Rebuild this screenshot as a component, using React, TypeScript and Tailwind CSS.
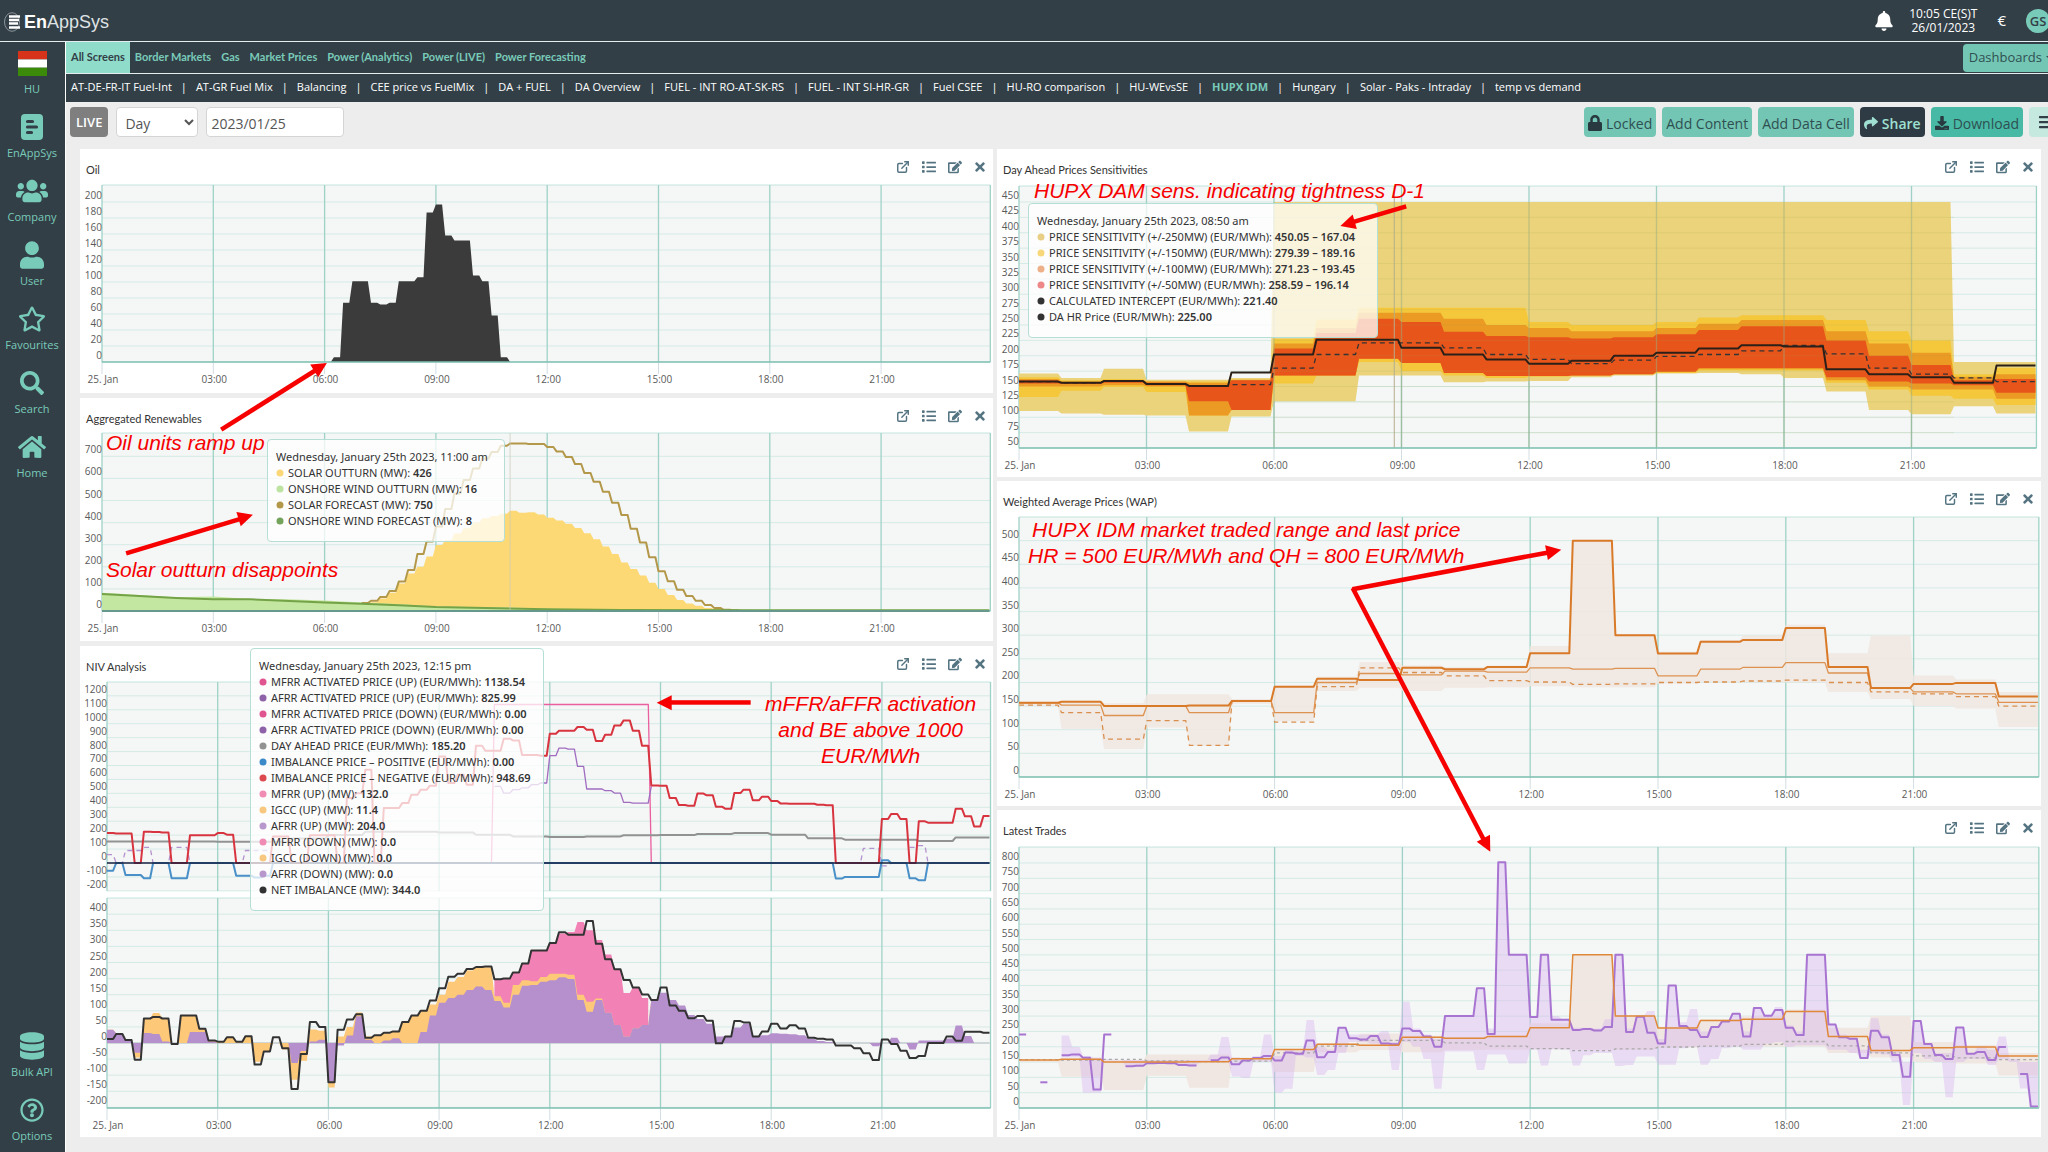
import React from 'react';
import { FaBars, FaBell, FaDatabase, FaDownload, FaEdit, FaHome, FaList, FaLock, FaRegQuestionCircle, FaRegStar, FaSearch, FaShare, FaTimes, FaUser, FaUsers } from 'react-icons/fa';
import { FiExternalLink } from 'react-icons/fi';

type Point = [number, number];

interface Scale {
  x0: number;
  hour: number;
  base: number;
  baseValue: number;
  unit: number;
}

const QUARTER = 0.25;
const TICK = 1 / 12;
const DAY_END = 24 - TICK;

// every value is held until five minutes before the next one
const steps = (values: number[], step: number, start = 0): Point[] =>
  values.flatMap((v, i): Point[] => {
    const t = start + i * step;
    return [[t, v], [t + step - TICK, v]];
  });

const px = (s: Scale, t: number) => s.x0 + t * s.hour;
const py = (s: Scale, v: number) => s.base - (v - s.baseValue) * s.unit;
const coords = (s: Scale, pts: Point[]) => pts.map(([t, v]) => `${px(s, t).toFixed(1)} ${py(s, v).toFixed(1)}`).join('L');
const linePath = (s: Scale, pts: Point[]) => `M${coords(s, pts)}`;
const areaPath = (s: Scale, upper: Point[], lower: Point[]) => `M${coords(s, upper)}L${coords(s, [...lower].reverse())}Z`;
const zeroLine = (pts: Point[]): Point[] => pts.map(([t]) => [t, 0]);

/* ---------- data ---------- */

const OIL = [6, 74, 101, 101, 74, 72, 74, 101, 101, 106, 187, 197, 158, 152, 152, 108, 101, 58, 6];

const SOLAR_OUTTURN = [
  32, 40, 57, 83, 125, 170, 200, 246, 299, 320, 351, 374, 400, 420, 430, 440, 454, 445, 447, 436, 422, 410, 395, 376, 352, 325, 292, 258, 220,
  190, 160, 128, 100, 72, 50, 34, 24, 14, 9, 6, 4,
];
const SOLAR_FORECAST = [
  36, 46, 64, 90, 133, 185, 258, 314, 382, 461, 532, 593, 645, 690, 720, 748, 758, 758, 756, 755, 742, 722, 697, 665, 625, 585, 540, 490, 435,
  372, 310, 243, 180, 135, 96, 68, 46, 27, 14, 6, 3,
];
const WIND_OUTTURN: Point[] = [[0, 83], [0.5, 78], [1, 72], [2, 62], [3, 65], [4, 54], [5, 53], [6, 47], [7, 38], [8, 32], [9, 20], [11, 16], [12, 10], [15, 6], [18, 4], [DAY_END, 4]];
const WIND_FORECAST: Point[] = [[0, 77], [1, 68], [2, 59], [3, 53], [4, 53], [6, 38], [7, 33], [8, 26], [9, 18], [12, 8], [14, 5], [18, 3], [DAY_END, 3]];

const IMBALANCE_NEGATIVE = [
  216, 212, 212, 0, 225, 222, 218, 0, 0, 199, 199, 199, 215, 203, 0, 0, 0, 0, 191, 191, 0, 0, 199, 199, 199, 0, 466, 500, 670, 0, 395, 395, 430,
  490, 526, 555, 765, 574, 634, 562, 842, 806, 806, 892, 880, 775, 775, 770, 928, 950, 950, 976, 957, 876, 921, 988, 1024, 950, 842, 557, 555,
  466, 416, 411, 498, 486, 404, 390, 502, 526, 450, 476, 445, 428, 425, 425, 425, 418, 414, 0, 0, 0, 0, 0, 316, 352, 316, 0, 299, 289, 289, 289,
  390, 335, 263, 337,
];
const IMBALANCE_POSITIVE = [
  -55, 0, -86, -86, -110, 0, 0, -110, -110, 0, 0, 0, 0, 0, -91, -91, -105, -91, 0, 0, 0, 0, 0, 0, 0, 0, 0, 0, 0, 0, 0, 0, 0, 0, 0, 0, 0, 0, 0, 0,
  0, 0, 0, 0, 0, 0, 0, 0, 0, 0, 0, 0, 0, 0, 0, 0, 0, 0, 0, 0, 0, 0, 0, 0, 0, 0, 0, 0, 0, 0, 0, 0, 0, 0, 0, 0, 0, 0, 0, -112, -100, -100, -100,
  -100, 20, 0, 0, -110, -124, 0, 0, 0, 0, 0, 0, 0,
];
const DAY_AHEAD = [155, 155, 155, 152, 152, 175, 200, 225, 225, 220, 203, 191, 187, 191, 199, 200, 208, 215, 203, 177, 167, 167, 158, 184];
const AFRR_PRICE_UP = [550, 502, 526, 540, 562, 574, 770, 825, 818, 694, 531, 531, 519, 502, 435, 430, 430];
const AFRR_PRICE_DOWN: Point[][] = [
  steps([60, 0, 90, 90, 112, 0], QUARTER),
  steps([0, 112, 112, 0], QUARTER, 1.5),
  steps([0, 90, 90, 90, 0], QUARTER, 3.5),
  steps([0, 105, 105, -20, 0], QUARTER, 20.25),
  steps([112, 125, 0], QUARTER, 21.75),
];

const NET_IMBALANCE = [
  12, 28, 9, -52, 76, 81, 76, -3, 85, 85, 44, 8, 4, 18, 4, 21, -67, -26, 18, -16, -143, -34, 65, 50, -122, 41, 73, 89, 16, 24, 32, 36, 65, 85,
  100, 132, 170, 206, 215, 230, 236, 238, 198, 200, 219, 247, 287, 287, 311, 344, 336, 336, 379, 308, 260, 229, 196, 172, 151, 134, 172, 116,
  100, 77, 84, 69, -1, 20, 68, 64, 20, 36, 60, 45, 55, 45, 16, 13, 11, -8, -8, -16, -32, -53, 11, -3, -24, -47, -40, 0, 0, 20, 7, 35, 35, 32,
];
const AFRR_MW = [
  41, 30, 8, -30, 31, 28, 5, 0, 0, 34, 34, 5, 0, 0, 0, 0, 0, 0, 0, 0, -62, -25, 5, 10, -120, -8, 23, 83, 10, 0, 8, 15, 0, 0, 34, 85, 125, 140,
  150, 165, 175, 165, 130, 110, 150, 178, 180, 190, 195, 204, 199, 134, 97, 134, 94, 56, 20, 46, 56, 134, 156, 134, 116, 87, 75, 60, 20, 22, 48,
  60, 20, 24, 30, 29, 27, 24, 13, 6, 3, 0, 0, 0, 0, -10, 0, 16, 0, -20, 8, 8, 8, 14, 54, 22, 0, 0,
];
const IGCC_MW = [
  41, 30, 8, -45, 75, 93, 76, 0, 85, 85, 44, 8, 4, 18, 4, 21, -58, -28, 0, -20, -114, -55, 42, 38, -138, 20, 50, 95, 20, 24, 30, 36, 65, 85, 100,
  120, 150, 190, 205, 225, 236, 235, 145, 125, 180, 195, 192, 205, 215, 215, 212, 150, 128, 138, 94, 56, 20, 46, 56, 134,
];
const MFRR_MW = [198, 200, 219, 247, 287, 287, 311, 340, 345, 376, 350, 320, 275, 229, 155, 172, 140];

// [upper, lower] for each hour
const SENS_250: Point[] = [
  [171, 110], [164, 106], [179, 104], [161, 103], [161, 77], [164, 101], [450, 126], [450, 126], [450, 168], [450, 168], [450, 157], [450, 158],
  [450, 159], [450, 165], [450, 168], [450, 171], [450, 172], [450, 170], [450, 164], [450, 142], [450, 112], [450, 105], [190, 118], [190, 106],
];
const SENS_150: Point[] = [
  [165, 133], [160, 143], [162, 149], [158, 141], [158, 103], [161, 112], [227, 155], [259, 168], [278, 190], [278, 175], [278, 168], [278, 164],
  [255, 166], [250, 168], [250, 170], [255, 172], [262, 176], [266, 176], [266, 176], [258, 156], [240, 145], [225, 135], [170, 130], [180, 120],
];
const SENS_100: Point[] = [
  [162, 150], [158, 150], [160, 152], [158, 150], [156, 103], [161, 112], [220, 168], [245, 168], [270, 195], [270, 188], [260, 172], [250, 167],
  [245, 167], [240, 168], [240, 170], [245, 174], [252, 178], [258, 178], [258, 178], [240, 160], [220, 150], [205, 145], [166, 145], [170, 130],
];
const SENS_50: Point[] = [
  [160, 155], [157, 154], [160, 156], [156, 152], [152, 126], [160, 112], [212, 168], [237, 168], [260, 195], [255, 188], [239, 172], [232, 167],
  [230, 167], [228, 168], [230, 170], [235, 174], [242, 180], [248, 180], [248, 180], [225, 165], [200, 158], [185, 155], [160, 152], [162, 140],
];
const DA_PRICE = [158, 156, 159, 154, 151, 173, 202, 226, 226, 213, 202, 194, 187, 192, 200, 205, 212, 217, 215, 178, 170, 165, 156, 184];
const INTERCEPT = [158, 156, 159, 154, 151, 153, 180, 202, 221, 221, 213, 202, 194, 187, 193, 199, 202, 208, 217, 203, 180, 170, 164, 158];

const LAST_PRICE = [157, 159, 150, 150, 151, 161, 191, 208, 205, 231, 228, 233, 262, 500, 300, 261, 286, 290, 315, 233, 188, 197, 199, 170];
const WAP = [157, 152, 130, 150, 136, 161, 136, 200, 219, 216, 224, 222, 231, 228, 230, 214, 228, 232, 242, 220, 188, 180, 176, 158];
const WAP_LOW = [152, 136, 80, 119, 67, 161, 116, 191, 231, 221, 214, 204, 201, 196, 197, 200, 201, 203, 205, 200, 180, 176, 170, 150];
const TRADED_RANGE: Point[] = [
  [158, 150], [162, 102], [156, 59], [175, 105], [175, 66], [165, 155], [193, 118], [212, 182], [243, 189], [236, 182], [232, 189], [236, 190],
  [277, 192], [500, 190], [302, 190], [265, 198], [290, 200], [300, 200], [322, 200], [262, 180], [300, 165], [215, 150], [206, 145], [180, 106],
];

const TRADES: Point[][] = [
  steps([240], QUARTER),
  steps([84], QUARTER, 0.5),
  steps([172, 175, 164, 60, 240], QUARTER, 1),
  steps([136, 138, 146, 147, 146, 140, 139], QUARTER, 2.5),
  steps(
    [
      156, 165, 143, 155, 163, 170, 155, 181, 177, 220, 166, 183, 262, 228, 224, 235, 211, 208, 260, 251, 233, 200, 300, 300, 300, 391, 242, 802,
      500, 500, 297, 500, 288, 288, 255, 258, 253, 264, 500, 248, 298, 246, 211, 400, 268, 255, 232, 264, 282, 308, 233, 326, 301, 320, 262, 238,
      500, 500, 273, 231, 226, 163, 252, 231, 173, 102, 284, 209, 173, 160, 263, 177, 183, 157, 199,
    ],
    QUARTER,
    4.5,
  ),
  steps([111, 5], QUARTER, 23.5),
];
// [upper, lower] for each quarter from 01:00
const TRADES_RANGE: Point[] = [
  [237, 165], [200, 165], [170, 50], [165, 50], [160, 155], [157, 155], [157, 136], [157, 138], [157, 146], [157, 147], [157, 146], [157, 140],
  [157, 139], [157, 150], [175, 150], [232, 150], [165, 103], [160, 98], [170, 150], [240, 150], [170, 50], [190, 63], [185, 170], [287, 165],
  [200, 108], [190, 124], [262, 180], [240, 215], [240, 215], [240, 210], [251, 205], [215, 124], [347, 215], [260, 200], [240, 160], [225, 63],
  [300, 184], [300, 184], [300, 184], [391, 124], [260, 175], [802, 175], [500, 145], [500, 145], [300, 190], [500, 139], [300, 192], [290, 190],
  [262, 139], [262, 172], [260, 180], [290, 180], [500, 137], [260, 140], [300, 168], [317, 168], [225, 141], [400, 141], [280, 195], [323, 200],
  [250, 141], [264, 160], [285, 195], [310, 200], [250, 190], [326, 190], [305, 210], [330, 215], [270, 200], [250, 205], [500, 205], [500, 205],
  [275, 190], [240, 190], [226, 180], [190, 160], [293, 180], [240, 175], [190, 150], [150, 10], [284, 180], [210, 160], [180, 150], [180, 35],
  [263, 150], [180, 160], [200, 160], [190, 140], [233, 160], [160, 150], [150, 64], [150, 0],
];

/* ---------- chart building blocks ---------- */

interface FrameProps {
  scale: Scale;
  top: number;
  bottom: number;
  ticks: number[];
  last?: boolean;
  children: React.ReactNode;
}

function Frame({ scale, top, bottom, ticks, last = true, children }: FrameProps) {
  const right = px(scale, DAY_END) + 1;
  const hours = [0, 3, 6, 9, 12, 15, 18, 21];
  return (
    <g>
      <rect x={scale.x0} y={top} width={right - scale.x0} height={bottom - top} fill="#f5f6f6" />
      <path d={`M${scale.x0} ${top}H${right}`} stroke="#c4e4dc" />
      {ticks.map((v) => (
        <path key={v} d={`M${scale.x0} ${py(scale, v)}H${right}`} stroke="#d5ebe6" />
      ))}
      {hours.map((h) => (
        <g key={h}>
          <path d={`M${px(scale, h)} ${top}V${bottom}`} stroke="#9fd2c6" strokeWidth="1.3" />
          {last && <path d={`M${px(scale, h)} ${bottom}v12`} stroke="#d3dde3" />}
        </g>
      ))}
      <path d={`M${right} ${top}V${bottom}`} stroke="#9fd2c6" strokeWidth="1.3" />
      {children}
      {last && <path d={`M${scale.x0} ${bottom}H${right}`} stroke="#7fc0b2" strokeWidth="1.5" />}
      <g className="fill-[#5a5a5a] text-[10px]">
        {ticks.map((v) => (
          <text key={v} x={scale.x0} y={py(scale, v) - 3} textAnchor="end">
            {v}
          </text>
        ))}
        {last &&
          hours.map((h) => (
            <text key={h} x={px(scale, h) + 1} y={bottom + 21} textAnchor="middle">
              {h === 0 ? '25. Jan' : `${String(h).padStart(2, '0')}:00`}
            </text>
          ))}
      </g>
    </g>
  );
}

const range = (from: number, to: number, by: number) => Array.from({ length: Math.round((to - from) / by) + 1 }, (_, i) => from + i * by);

function Line({ scale, points, color, width = 2, dash }: { scale: Scale; points: Point[]; color: string; width?: number; dash?: string }) {
  return <path d={linePath(scale, points)} fill="none" stroke={color} strokeWidth={width} strokeDasharray={dash} strokeLinejoin="round" />;
}

function Band({ scale, data, step, start = 0, color, opacity }: { scale: Scale; data: Point[]; step: number; start?: number; color: string; opacity?: number }) {
  const upper = steps(data.map(([hi]) => hi), step, start);
  const lower = steps(data.map(([, lo]) => lo), step, start);
  return <path d={areaPath(scale, upper, lower)} fill={color} opacity={opacity} />;
}

function Area({ scale, points, color }: { scale: Scale; points: Point[]; color: string }) {
  return <path d={areaPath(scale, points, zeroLine(points))} fill={color} />;
}

/* ---------- charts ---------- */

function OilChart() {
  const s: Scale = { x0: 22, hour: 37.1, base: 179, baseValue: 0, unit: 0.8 };
  const pts: Point[] = [[6.25 - TICK, 0], ...steps(OIL, QUARTER, 6.25), [11, 0]];
  return (
    <svg viewBox="0 0 913 210" className="block h-auto w-full" role="img" aria-label="Oil">
      <Frame scale={s} top={2} bottom={179} ticks={range(0, 200, 20)}>
        <Area scale={s} points={pts} color="#3b3b3b" />
      </Frame>
    </svg>
  );
}

function RenewablesChart() {
  const s: Scale = { x0: 22, hour: 37.1, base: 179, baseValue: 0, unit: 0.221 };
  return (
    <svg viewBox="0 0 913 209" className="block h-auto w-full" role="img" aria-label="Aggregated Renewables">
      <Frame scale={s} top={1} bottom={179} ticks={range(0, 700, 100)}>
        <Area scale={s} points={steps(SOLAR_OUTTURN, QUARTER, 7)} color="#fdd975" />
        <Area scale={s} points={WIND_OUTTURN} color="#c3e6a0" />
        <Line scale={s} points={steps(SOLAR_FORECAST, QUARTER, 7)} color="#b3984a" />
        <Line scale={s} points={WIND_FORECAST} color="#74a347" />
        <path d={`M${px(s, 11)} 1V179`} stroke="#c9c9b9" opacity="0.7" />
        <path d={`M22 179H${px(s, DAY_END)}`} stroke="#222" strokeWidth="2" />
      </Frame>
    </svg>
  );
}

function NivChart() {
  const price: Scale = { x0: 27, hour: 36.9, base: 183, baseValue: 0, unit: 0.1393 };
  const volume: Scale = { x0: 27, hour: 36.9, base: 363, baseValue: 0, unit: 0.322 };
  return (
    <svg viewBox="0 0 913 457" className="block h-auto w-full" role="img" aria-label="NIV Analysis">
      <Frame scale={price} top={2} bottom={211} ticks={range(-200, 1200, 100)} last={false}>
        {AFRR_PRICE_DOWN.map((pts, i) => (
          <Line key={i} scale={price} points={pts} color="#b592cf" width={1.3} dash="5 4" />
        ))}
        <Line scale={price} points={[[10.42, 0], [10.5, 1138], [14.67, 1138], [14.75, 0]]} color="#ea5f9f" width={1.3} />
        <Line scale={price} points={[...steps(AFRR_PRICE_UP, QUARTER, 10.5), [14.75, 550]]} color="#a06cc0" width={1.3} />
        <Line scale={price} points={steps(DAY_AHEAD, 1)} color="#929292" />
        <Line scale={price} points={steps(IMBALANCE_POSITIVE, QUARTER)} color="#4a90c8" />
        <Line scale={price} points={steps(IMBALANCE_NEGATIVE, QUARTER)} color="#d8343f" />
        <path d={`M27 183H${px(price, DAY_END)}`} stroke="#17203f" strokeWidth="1.5" />
      </Frame>
      <Frame scale={volume} top={218} bottom={428} ticks={range(-200, 400, 50)}>
        <path d={`M27 363H${px(volume, DAY_END)}`} stroke="#b9bcc0" />
        <Area scale={volume} points={steps(MFRR_MW, QUARTER, 10.5)} color="#f282b6" />
        <Area scale={volume} points={steps(IGCC_MW, QUARTER)} color="#fdc878" />
        <Area scale={volume} points={steps(AFRR_MW, QUARTER)} color="#b690cd" />
        <Line scale={volume} points={steps(NET_IMBALANCE, QUARTER)} color="#333" />
      </Frame>
    </svg>
  );
}

function SensitivityChart() {
  const s: Scale = { x0: 22, hour: 42.5, base: 265, baseValue: 50, unit: 0.615 };
  return (
    <svg viewBox="0 0 1044 294" className="block h-auto w-full" role="img" aria-label="Day Ahead Prices Sensitivities">
      <Frame scale={s} top={3} bottom={265} ticks={range(50, 450, 25)}>
        <Band scale={s} data={SENS_250} step={1} color="#ead37a" />
        <Band scale={s} data={SENS_150} step={1} color="#f5c83c" />
        <Band scale={s} data={SENS_100} step={1} color="#eb9a24" />
        <Band scale={s} data={SENS_50} step={1} color="#e8551b" />
        {[6, 9, 12, 15, 18, 21].map((h) => (
          <path key={h} d={`M${px(s, h)} 19V265`} stroke="#9aae80" strokeWidth="1.3" opacity="0.5" />
        ))}
        {range(75, 425, 25).map((v) => (
          <path key={v} d={`M${px(s, 6)} ${py(s, v)}H${px(s, 22)}`} stroke="#a3a34a" opacity="0.15" />
        ))}
        <path d={`M${px(s, 8.83)} 3V265`} stroke="#b5ae8c" />
        <Line scale={s} points={steps(INTERCEPT, 1)} color="#333" width={1.3} dash="5 4" />
        <Line scale={s} points={steps(DA_PRICE, 1)} color="#2b2018" />
      </Frame>
    </svg>
  );
}

function WapChart() {
  const s: Scale = { x0: 22, hour: 42.6, base: 262, baseValue: 0, unit: 0.4727 };
  return (
    <svg viewBox="0 0 1044 291" className="block h-auto w-full" role="img" aria-label="Weighted Average Prices (WAP)">
      <Frame scale={s} top={2} bottom={262} ticks={range(0, 500, 50)}>
        <Band scale={s} data={TRADED_RANGE} step={1} color="#f0e6e0" opacity={0.85} />
        <Line scale={s} points={steps(WAP_LOW, 1)} color="#d9904e" width={1.3} dash="5 4" />
        <Line scale={s} points={steps(WAP, 1)} color="#dd9250" width={1.3} />
        <Line scale={s} points={steps(LAST_PRICE, 1)} color="#d97a28" />
      </Frame>
    </svg>
  );
}

function TradesChart() {
  const s: Scale = { x0: 22, hour: 42.6, base: 264, baseValue: 0, unit: 0.3063 };
  return (
    <svg viewBox="0 0 1044 293" className="block h-auto w-full" role="img" aria-label="Latest Trades">
      <Frame scale={s} top={3} bottom={264} ticks={range(0, 800, 50)}>
        <Band scale={s} data={TRADED_RANGE} step={1} color="#f0e6e0" opacity={0.9} />
        <Band scale={s} data={TRADES_RANGE} step={QUARTER} start={1} color="#d9b4ee" opacity={0.42} />
        <Line scale={s} points={steps(INTERCEPT, 1)} color="#a9a9a9" width={1.3} dash="3 3" />
        {TRADES.map((pts, i) => (
          <Line key={i} scale={s} points={pts} color="#a874d2" />
        ))}
        <Line scale={s} points={steps(LAST_PRICE, 1)} color="#e0883a" width={1.5} />
      </Frame>
    </svg>
  );
}

/* ---------- panels ---------- */

function Panel({ title, children }: { title: string; children: React.ReactNode }) {
  return (
    <section className="relative bg-white">
      <header className="flex h-[34px] items-center justify-between pr-[7px] pl-1.5">
        <h2 className="pt-2 font-['Lato','Open_Sans',sans-serif] text-[11px] leading-4 text-[#333]">{title}</h2>
        <div className="flex items-center gap-3 pt-0.5 text-[14px] text-[#557482]">
          <button type="button" aria-label="Open in new window">
            <FiExternalLink strokeWidth={2.5} />
          </button>
          <button type="button" aria-label="Legend">
            <FaList />
          </button>
          <button type="button" aria-label="Edit">
            <FaEdit />
          </button>
          <button type="button" aria-label="Remove">
            <FaTimes className="w-3" />
          </button>
        </div>
      </header>
      {children}
    </section>
  );
}

interface TooltipRow {
  color: string;
  label: string;
  value: string;
}

function Tooltip({ className, title, rows }: { className: string; title: string; rows: TooltipRow[] }) {
  return (
    <div
      className={`absolute rounded-sm border border-[#b5dfd5] bg-white/75 px-2 pt-[9px] pb-3 font-['Noto_Sans','Open_Sans',sans-serif] text-[11px] leading-4 whitespace-nowrap text-[#333] ${className}`}
    >
      <p>{title}</p>
      <ul>
        {rows.map((row) => (
          <li key={row.label} className="flex items-center gap-1">
            <svg viewBox="0 0 8 8" className="h-2 w-2">
              <circle cx="4" cy="4" r="3.5" fill={row.color} />
            </svg>
            <span>
              {row.label}: <b className="font-semibold">{row.value}</b>
            </span>
          </li>
        ))}
      </ul>
    </div>
  );
}

const RENEWABLES_ROWS: TooltipRow[] = [
  { color: '#fbd778', label: 'SOLAR OUTTURN (MW)', value: '426' },
  { color: '#bce3a0', label: 'ONSHORE WIND OUTTURN (MW)', value: '16' },
  { color: '#b3984a', label: 'SOLAR FORECAST (MW)', value: '750' },
  { color: '#74a35c', label: 'ONSHORE WIND FORECAST (MW)', value: '8' },
];

const NIV_ROWS: TooltipRow[] = [
  { color: '#e0558f', label: 'MFRR ACTIVATED PRICE (UP) (EUR/MWh)', value: '1138.54' },
  { color: '#8e62a8', label: 'AFRR ACTIVATED PRICE (UP) (EUR/MWh)', value: '825.99' },
  { color: '#e0558f', label: 'MFRR ACTIVATED PRICE (DOWN) (EUR/MWh)', value: '0.00' },
  { color: '#8e62a8', label: 'AFRR ACTIVATED PRICE (DOWN) (EUR/MWh)', value: '0.00' },
  { color: '#929292', label: 'DAY AHEAD PRICE (EUR/MWh)', value: '185.20' },
  { color: '#3c8ac8', label: 'IMBALANCE PRICE – POSITIVE (EUR/MWh)', value: '0.00' },
  { color: '#dc4a50', label: 'IMBALANCE PRICE – NEGATIVE (EUR/MWh)', value: '948.69' },
  { color: '#f08cb4', label: 'MFRR (UP) (MW)', value: '132.0' },
  { color: '#f8c880', label: 'IGCC (UP) (MW)', value: '11.4' },
  { color: '#b898cc', label: 'AFRR (UP) (MW)', value: '204.0' },
  { color: '#f08cb4', label: 'MFRR (DOWN) (MW)', value: '0.0' },
  { color: '#f8c880', label: 'IGCC (DOWN) (MW)', value: '0.0' },
  { color: '#b898cc', label: 'AFRR (DOWN) (MW)', value: '0.0' },
  { color: '#333333', label: 'NET IMBALANCE (MW)', value: '344.0' },
];

const SENSITIVITY_ROWS: TooltipRow[] = [
  { color: '#e8cf85', label: 'PRICE SENSITIVITY (+/-250MW) (EUR/MWh)', value: '450.05 – 167.04' },
  { color: '#f8d77a', label: 'PRICE SENSITIVITY (+/-150MW) (EUR/MWh)', value: '279.39 – 189.16' },
  { color: '#eeb088', label: 'PRICE SENSITIVITY (+/-100MW) (EUR/MWh)', value: '271.23 – 193.45' },
  { color: '#ee8888', label: 'PRICE SENSITIVITY (+/-50MW) (EUR/MWh)', value: '258.59 – 196.14' },
  { color: '#333333', label: 'CALCULATED INTERCEPT (EUR/MWh)', value: '221.40' },
  { color: '#333333', label: 'DA HR Price (EUR/MWh)', value: '225.00' },
];

/* ---------- annotations ---------- */

const ARROWS: [number, number, number, number][] = [
  [142, 280, 247, 214],
  [47, 404, 173, 366],
  [670, 554, 577, 554],
  [1326, 58, 1261, 77],
  [1274, 440, 1482, 401],
  [1274, 440, 1411, 703],
];

function Arrow({ from }: { from: [number, number, number, number] }) {
  const [x1, y1, x2, y2] = from;
  const len = Math.hypot(x2 - x1, y2 - y1);
  const angle = (Math.atan2(y2 - y1, x2 - x1) * 180) / Math.PI;
  return (
    <g transform={`translate(${x1} ${y1}) rotate(${angle})`} fill="#f60000">
      <rect x="-1" y="-2" width={len - 12} height="4.5" />
      <path d={`M${len} 0l-15 -7.5v15z`} />
    </g>
  );
}

function Annotations() {
  const note = 'absolute text-[21px] leading-[26px] whitespace-nowrap text-[#f60000] italic';
  return (
    <div className="pointer-events-none absolute inset-0 font-['Liberation_Sans',Arial,sans-serif]">
      <svg viewBox="0 0 1962 988" className="absolute inset-x-0 top-0 h-auto w-full">
        {ARROWS.map((a) => (
          <Arrow key={a.join()} from={a} />
        ))}
      </svg>
      <p className={`${note} top-[281px] left-[26px]`}>Oil units ramp up</p>
      <p className={`${note} top-[408px] left-[26px]`}>Solar outturn disappoints</p>
      <p className={`${note} top-[542px] left-[685px] text-center`}>
        mFFR/aFFR activation
        <br />
        and BE above 1000
        <br />
        EUR/MWh
      </p>
      <p className={`${note} top-[29px] left-[954px]`}>HUPX DAM sens. indicating tightness D-1</p>
      <p className={`${note} top-[368px] left-[948px] text-center`}>
        HUPX IDM market traded range and last price
        <br />
        HR = 500 EUR/MWh and QH = 800 EUR/MWh
      </p>
    </div>
  );
}

/* ---------- navigation ---------- */

function Sheet() {
  return (
    <svg viewBox="0 0 22 26" className="h-[26px] w-[22px]">
      <rect width="22" height="26" rx="4" fill="currentColor" />
      <path d="M6.500 7.500h5M6.500 13h9M6.500 18.500h4" stroke="#333f47" strokeWidth="3.200" strokeLinecap="round" />
    </svg>
  );
}

function Flag() {
  return (
    <svg viewBox="0 0 29 25" className="h-[25px] w-[29px]">
      <rect width="29" height="8.400" fill="#d6331a" />
      <rect y="8.400" width="29" height="8.300" fill="#fff" />
      <rect y="16.700" width="29" height="8.300" fill="#3c8a0a" />
    </svg>
  );
}

const SIDE_TOP = [
  { label: 'HU', icon: <Flag /> },
  { label: 'EnAppSys', icon: <Sheet /> },
  { label: 'Company', icon: <FaUsers className="h-8 w-8" /> },
  { label: 'User', icon: <FaUser className="h-7 w-6" /> },
  { label: 'Favourites', icon: <FaRegStar className="h-7 w-7" /> },
  { label: 'Search', icon: <FaSearch className="h-6 w-6" /> },
  { label: 'Home', icon: <FaHome className="h-7 w-7" /> },
];
const SIDE_BOTTOM = [
  { label: 'Bulk API', icon: <FaDatabase className="h-7 w-6" /> },
  { label: 'Options', icon: <FaRegQuestionCircle className="h-6 w-6" /> },
];

function SideItem({ label, icon }: { label: string; icon: React.ReactNode }) {
  return (
    <a href="#" className="flex flex-col items-center gap-1 text-[11px] leading-4 text-[#79cbb9]">
      <span className="flex h-7 items-center justify-center">{icon}</span>
      {label}
    </a>
  );
}

const TABS = ['All Screens', 'Border Markets', 'Gas', 'Market Prices', 'Power (Analytics)', 'Power (LIVE)', 'Power Forecasting'];
const SCREENS = [
  'AT-DE-FR-IT Fuel-Int',
  'AT-GR Fuel Mix',
  'Balancing',
  'CEE price vs FuelMix',
  'DA + FUEL',
  'DA Overview',
  'FUEL - INT RO-AT-SK-RS',
  'FUEL - INT SI-HR-GR',
  'Fuel CSEE',
  'HU-RO comparison',
  'HU-WEvsSE',
  'HUPX IDM',
  'Hungary',
  'Solar - Paks - Intraday',
  'temp vs demand',
];

function Logo() {
  return (
    <a href="#" className="flex items-center gap-0.5 pt-0.5 text-[18px] leading-6 text-white font-['Liberation_Sans',Arial,sans-serif]">
      <svg viewBox="0 0 18 20" className="h-5 w-[18px]">
        <ellipse cx="8" cy="10" rx="7.500" ry="9.300" fill="none" stroke="#8b949a" strokeWidth="1" />
        <path d="M5 4.500h11M5 8h10M5 11.500h9M5 15.500h11" stroke="#fff" strokeWidth="2.400" />
      </svg>
      <span>
        <b>En</b>
        <span className="text-[#dfe3e5]">AppSys</span>
      </span>
    </a>
  );
}

export default function App() {
  const button = 'flex h-[30px] shrink-0 items-center gap-1 rounded px-1 pt-0.5 text-[14px]';
  return (
    <div className="flex min-h-screen flex-col overflow-hidden bg-[#ededed] font-['Open_Sans','Noto_Sans',sans-serif]">
      <header className="flex h-[42px] items-center justify-between border-b border-[#e4eeee] bg-[#333f47] pl-1">
        <Logo />
        <div className="-mr-0.5 flex shrink-0 items-center text-white">
          <button type="button" aria-label="Notifications" className="mr-4">
            <FaBell className="h-5 w-[18px]" />
          </button>
          <div className="mr-5 text-center text-[12px] leading-[14px]">
            10:05 CE(S)T
            <br />
            26/01/2023
          </div>
          <button type="button" aria-label="Currency" className="mr-5 text-[15px]">
            €
          </button>
          <button type="button" className="h-6 w-6 rounded-full bg-[#79cbb9] text-[13px] leading-6 font-semibold text-[#333f47]">
            GS
          </button>
        </div>
      </header>

      <div className="flex flex-1">
        <aside className="flex w-[66px] shrink-0 flex-col justify-between border-r border-white bg-[#333f47] pt-[7px] pr-px pb-2">
          <nav aria-label="Main" className="flex flex-col gap-4">
            {SIDE_TOP.map((item) => (
              <SideItem key={item.label} {...item} />
            ))}
          </nav>
          <nav aria-label="Tools" className="flex flex-col gap-4">
            {SIDE_BOTTOM.map((item) => (
              <SideItem key={item.label} {...item} />
            ))}
          </nav>
        </aside>

        <main className="flex min-w-0 flex-1 flex-col">
          <div className="flex h-8 items-stretch justify-between border-b border-[#e4eeee] bg-[#333f47]">
            <nav aria-label="Categories" className="flex font-['Lato','Open_Sans',sans-serif] text-[11px] font-bold">
              {TABS.map((tab, i) => (
                <a key={tab} href="#" className={i === 0 ? 'flex items-center bg-[#8fdccb] px-[5px] text-[#333f47]' : 'flex items-center px-[5px] text-[#79cbb9]'}>
                  {tab}
                </a>
              ))}
            </nav>
            <button type="button" className="-mr-3 flex h-7 shrink-0 items-center gap-1 self-center rounded bg-[#74c6b4] px-1.5 text-[13px] text-[#2f4f52]">
              Dashboards
              <span className="border-x-4 border-t-4 border-x-transparent border-t-[#2f4f52]" />
            </button>
          </div>
          <nav aria-label="Screens" className="flex h-7 items-center bg-[#333f47] pb-0.5 pl-[5px] text-[11px] whitespace-nowrap text-white">
            {SCREENS.map((name, i) => (
              <React.Fragment key={name}>
                {i > 0 && <span className="px-[9px]">|</span>}
                <a href="#" className={name === 'HUPX IDM' ? 'font-bold text-[#79cbb9]' : ''}>
                  {name}
                </a>
              </React.Fragment>
            ))}
          </nav>

          <div className="flex items-center justify-between pt-[5px] pb-3">
            <div className="flex items-center gap-2 pl-1">
              <button type="button" className="h-[30px] rounded bg-[#7f7f7f] px-1.5 pt-0.5 text-[13px] font-semibold text-white">
                LIVE
              </button>
              <select aria-label="Period" defaultValue="Day" className="h-[30px] w-[82px] rounded border border-[#d5d5d5] bg-white pt-0.5 pl-1 text-[14px] text-[#555]">
                <option>Day</option>
                <option>Week</option>
                <option>Month</option>
              </select>
              <input aria-label="Date" defaultValue="2023/01/25" className="h-[30px] w-[138px] rounded border border-[#d5d5d5] bg-white px-1 pt-0.5 text-[14px] text-[#555]" />
            </div>
            <div className="-mr-[15px] flex shrink-0 gap-1.5">
              <button type="button" className={`${button} bg-[#74c6b4] text-[#2f4f52]`}>
                <FaLock className="h-4 w-3.5 text-[#28393f]" />
                Locked
              </button>
              <button type="button" className={`${button} bg-[#74c6b4] text-[#2f4f52]`}>
                Add Content
              </button>
              <button type="button" className={`${button} bg-[#74c6b4] text-[#2f4f52]`}>
                Add Data Cell
              </button>
              <button type="button" className={`${button} bg-[#2f3b44] font-semibold text-[#9fe0d2]`}>
                <FaShare className="h-3.5 w-3.5" />
                Share
              </button>
              <button type="button" className={`${button} bg-[#48b9a4] text-[#2f4f52]`}>
                <FaDownload className="h-3.5 w-3.5 text-[#28393f]" />
                Download
              </button>
              <button type="button" aria-label="Menu" className="flex h-[30px] shrink-0 items-center rounded bg-[#c5e8df] px-2 text-[#333f47]">
                <FaBars className="h-4 w-[18px]" />
              </button>
            </div>
          </div>

          <div className="relative mr-[7px] mb-[15px] ml-3.5 grid grid-cols-[913fr_1044fr] items-start gap-1">
            <div className="flex flex-col gap-[5px]">
              <Panel title="Oil">
                <OilChart />
              </Panel>
              <Panel title="Aggregated Renewables">
                <RenewablesChart />
                <Tooltip className="top-[41px] left-[187px] w-[238px]" title="Wednesday, January 25th 2023, 11:00 am" rows={RENEWABLES_ROWS} />
              </Panel>
              <Panel title="NIV Analysis">
                <NivChart />
                <Tooltip className="top-0.5 left-[170px] w-[294px]" title="Wednesday, January 25th 2023, 12:15 pm" rows={NIV_ROWS} />
              </Panel>
            </div>
            <div className="flex flex-col gap-1">
              <Panel title="Day Ahead Prices Sensitivities">
                <SensitivityChart />
                <Tooltip className="top-[54px] left-[31px] w-[350px]" title="Wednesday, January 25th 2023, 08:50 am" rows={SENSITIVITY_ROWS} />
              </Panel>
              <Panel title="Weighted Average Prices (WAP)">
                <WapChart />
              </Panel>
              <Panel title="Latest Trades">
                <TradesChart />
              </Panel>
            </div>
            <Annotations />
          </div>
        </main>
      </div>
    </div>
  );
}
